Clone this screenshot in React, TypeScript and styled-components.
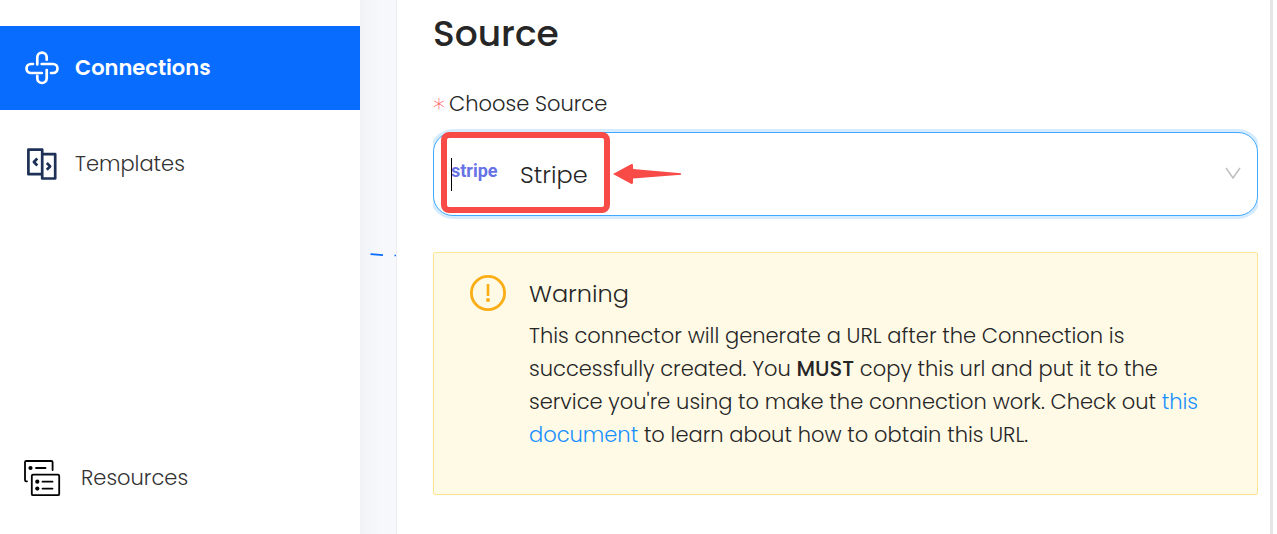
import React from "react";
import styled, { createGlobalStyle, css } from "styled-components";

const GlobalStyle = createGlobalStyle`
  * { box-sizing: border-box; }
  html, body { margin: 0; padding: 0; }
  body {
    background: #fff;
    color: #262626;
    font-family: Poppins, Inter, "Open Sans", sans-serif;
    font-size: 21px;
    font-weight: 300;
    overflow: hidden;
  }
`;

const Page = styled.div`
  display: flex;
  min-height: 100vh;
`;

const Sidebar = styled.nav`
  flex: 0 0 360px;
  display: flex;
  flex-direction: column;
  gap: 12px;
  padding: 26px 0 14px;
  background: #fff;
`;

const NavItem = styled.a<{ $active?: boolean; $last?: boolean }>`
  display: flex;
  align-items: center;
  gap: 16px;
  height: 84px;
  padding-left: 24px;
  color: #333;
  line-height: 30px;
  text-decoration: none;
  ${(p) => p.$active && css`
    background: #086cff;
    color: #fff;
    font-weight: 600;
  `}
  ${(p) => p.$last && css`
    gap: 20px;
    margin-top: auto;
  `}
  svg { flex: none; }
`;

const Canvas = styled.div`
  flex: 0 0 36px;
  padding-top: 250px;
  background: linear-gradient(90deg, #f1f2f6, #f7f8fc 20px);
  svg { display: block; }
`;

const Panel = styled.main`
  flex: 1;
  min-width: 0;
  margin-right: 4px;
  padding: 10px 12px 36px 36px;
  border-left: 1px solid #ebedf0;
  border-right: 3px solid #e6e6e6;
`;

const Title = styled.h1`
  margin: 0;
  font-size: 36px;
  line-height: 48px;
  font-weight: 500;
`;

const Label = styled.label`
  display: flex;
  gap: 4px;
  height: 32px;
  margin: 30px 0 12px;
  line-height: 32px;
`;

const Required = styled.span`
  color: #ff4d4f;
  font-family: "DejaVu Sans", sans-serif;
  font-size: 24px;
  line-height: 40px;
`;

const SelectField = styled.div`
  position: relative;
  height: 84px;
  overflow-x: clip;
`;

const Select = styled.select`
  appearance: none;
  width: 100%;
  height: 100%;
  padding: 0 60px 0 86px;
  border: 1px solid #40a9ff;
  border-radius: 20px;
  outline: none;
  background: #fff;
  box-shadow: 0 0 0 3px #d5ebff;
  color: #262626;
  font: inherit;
  font-size: 24px;
`;

const Overlay = styled.div`
  position: absolute;
  pointer-events: none;
  svg { display: block; }
`;

const Highlight = styled(Overlay)`
  left: 8px;
  top: 0;
  width: 169px;
  height: 81px;
  border: 6px solid #f84b47;
  border-radius: 8px;
`;

const Cursor = styled(Overlay)`
  left: 18px;
  top: 26px;
  width: 1px;
  height: 33px;
  background: #000;
`;

const Brand = styled(Overlay)`
  left: 18px;
  top: 27px;
  color: #6772e5;
  font: 700 18px/24px Roboto, sans-serif;
`;

const Pointer = styled(Overlay)`
  left: 180px;
  top: 31px;
`;

const Chevron = styled(Overlay)`
  right: 17px;
  top: 35px;
`;

const Alert = styled.section`
  display: flex;
  gap: 22px;
  margin-top: 36px;
  padding: 22px 36px 43px;
  border: 1px solid #ffe58f;
  border-radius: 2px;
  background: #fffae6;
  svg { flex: none; }
`;

const AlertTitle = styled.h2`
  margin: 0 0 6px;
  font-size: 24px;
  line-height: 38px;
  font-weight: 300;
`;

const AlertText = styled.p`
  margin: 0;
  line-height: 33px;
  strong { font-weight: 500; }
  a { color: #1890ff; text-decoration: none; }
`;

const ConnectionsIcon = () => (
  <svg width="35" height="36" viewBox="0 0 35 36" fill="none" stroke="currentColor" strokeWidth="2.7" strokeLinecap="round">
    <path d="M13.3 14.5V7.3a4.7 4.7 0 0 1 9.4 0v2.4" />
    <path d="M17.7 14H29a4.5 4.5 0 0 1 0 9h-2" />
    <path d="M22.7 20v8.3a4.7 4.7 0 0 1-9.4 0v-2.4" />
    <path d="M17.8 23H7a4.5 4.5 0 0 1 0-9h2" />
  </svg>
);

const TemplatesIcon = () => (
  <svg width="35" height="36" viewBox="0 0 35 36" fill="none" stroke="#1d3055" strokeWidth="2.7" strokeLinejoin="round">
    <path d="M4.400 3.700h13.800v24.500H4.400zM18.200 8.200h13v24.300h-13z" />
    <path d="m13.300 12.500-3.400 3.500 3.400 3.500M22.800 17l3.400 3.400-3.400 3.400" />
  </svg>
);

const ResourcesIcon = () => (
  <svg width="37" height="38" viewBox="0 0 37 38" fill="none" stroke="#000" strokeWidth="1.8" strokeLinecap="round" strokeLinejoin="round">
    <path d="M3 22.3H2.3Q1 22.3 1 21V3.3Q1 2 2.3 2h25Q28.600 2 28.600 3.300V11" />
    <rect x="7.800" y="15.600" width="27.400" height="20.600" rx="1.300" />
    <path d="M12 9h9.500M18.500 22.700h10M18.500 29.600h10" />
    <g fill="#000" stroke="none">
      <circle cx="6.500" cy="9" r="2.100" />
      <circle cx="13.300" cy="22.700" r="2.100" />
      <circle cx="13.300" cy="29.600" r="2.100" />
    </g>
  </svg>
);

export default function App() {
  return (
    <>
      <GlobalStyle />
      <Page>
        <Sidebar>
          <NavItem href="#connections" $active><ConnectionsIcon />Connections</NavItem>
          <NavItem href="#templates"><TemplatesIcon />Templates</NavItem>
          <NavItem href="#resources" $last><ResourcesIcon />Resources</NavItem>
        </Sidebar>
        <Canvas>
          <svg width="36" height="10" fill="none" stroke="#086cff" strokeWidth="1.7">
            <path d="m10.500 4.200 12.500 1M34.500 5.500H36" />
          </svg>
        </Canvas>
        <Panel>
          <Title>Source</Title>
          <Label htmlFor="source"><Required>*</Required>Choose Source</Label>
          <SelectField>
            <Select id="source" defaultValue="stripe">
              <option value="stripe">Stripe</option>
            </Select>
            <Brand aria-hidden="true">stripe</Brand>
            <Cursor />
            <Highlight />
            <Pointer>
              <svg width="70" height="22" fill="#f84b47">
                <path d="M0 11 18 1.300Q20 .500 20 2.500V6L68 10.300V11.700L20 15.500V19.500Q20 21.500 18 20.700Z" />
              </svg>
            </Pointer>
            <Chevron>
              <svg width="16" height="13" fill="none" stroke="#bfbfbf" strokeWidth="1.5">
                <path d="m1 1 7 10 7-10" />
              </svg>
            </Chevron>
          </SelectField>
          <Alert>
            <svg width="37" height="37" viewBox="0 0 37 37" fill="none" stroke="#faad14">
              <circle cx="18" cy="18" r="16.600" strokeWidth="2.8" />
              <path d="M18 9v12" strokeWidth="2.6" />
              <circle cx="18" cy="25" r="2" fill="#faad14" stroke="none" />
            </svg>
            <div>
              <AlertTitle>Warning</AlertTitle>
              <AlertText>
                This connector will generate a URL after the Connection is successfully created. You <strong>MUST</strong> copy this url and put it to the service you're using to make the connection work. Check out <a href="#document">this document</a> to learn about how to obtain this URL.
              </AlertText>
            </div>
          </Alert>
        </Panel>
      </Page>
    </>
  );
}
